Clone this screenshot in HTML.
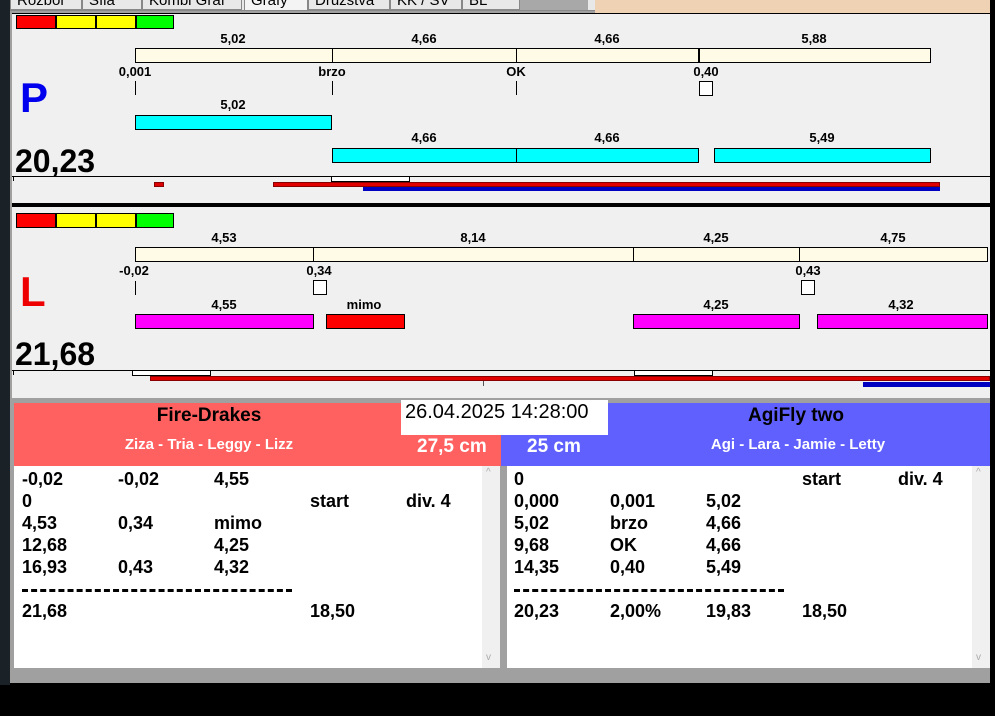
<!DOCTYPE html>
<html><head><meta charset="utf-8"><style>
*{margin:0;padding:0;box-sizing:border-box}
body{width:995px;height:716px;background:#000;position:relative;overflow:hidden;font-family:"Liberation Sans",Arial,sans-serif;font-weight:bold;color:#000}
div{position:absolute}
.t{font-size:13px;white-space:nowrap;transform:translateX(-50%)}
.c{border:1px solid #000}
.cr{background:#fffbe6}
.cy{background:#00ffff}
.mg{background:#ff00ff}
.r{font-size:18px;white-space:nowrap}
.sq{width:14px;height:15px;background:#fff;border:1px solid #000}
.tk{width:1px;height:14px;background:#000}
.tab{top:-9px;height:19px;background:#e8e8e8;border:1px solid #888;font-size:15px;font-weight:normal;padding:0 6px;white-space:nowrap;overflow:hidden}
</style></head><body>
<div style="left:0;top:0;width:10px;height:685px;background:#1a2228"></div>
<div style="left:10px;top:0;width:980px;height:685px;background:#a0a0a0"></div>
<!-- tabs -->
<div style="left:10px;top:0;width:585px;height:11px;background:#e8e8e8;border-bottom:1px solid #888"></div>
<div class="tab" style="left:10px;width:72px">Rozbor</div>
<div class="tab" style="left:82px;width:60px">Síla</div>
<div class="tab" style="left:142px;width:100px">Kombi Graf</div>
<div class="tab" style="left:244px;width:64px;background:#f4f4f4;border-bottom:none">Grafy</div>
<div class="tab" style="left:308px;width:82px">Družstva</div>
<div class="tab" style="left:390px;width:72px">KK / SV</div>
<div class="tab" style="left:462px;width:58px">BL</div>
<div style="left:520px;top:0;width:68px;height:10px;background:#a8a8a8"></div>
<div style="left:595px;top:0;width:395px;height:13px;background:#efd2b4"></div>
<!-- panel P -->
<div style="left:12px;top:13px;width:978px;height:190px;background:#f0f0f0;border-top:1px solid #000"></div>
<div style="left:16px;top:15px;width:40px;height:14px;background:#f00;border:1px solid #000"></div>
<div style="left:56px;top:15px;width:40px;height:14px;background:#ff0;border:1px solid #000"></div>
<div style="left:96px;top:15px;width:40px;height:14px;background:#ff0;border:1px solid #000"></div>
<div style="left:136px;top:15px;width:38px;height:14px;background:#0f0;border:1px solid #000"></div>
<div class="t" style="left:233px;top:31px">5,02</div>
<div class="t" style="left:424px;top:31px">4,66</div>
<div class="t" style="left:607px;top:31px">4,66</div>
<div class="t" style="left:814px;top:31px">5,88</div>
<div class="c cr" style="left:135px;top:48px;width:796px;height:15px"></div>
<div style="left:332px;top:48px;width:1px;height:15px;background:#000"></div>
<div style="left:516px;top:48px;width:1px;height:15px;background:#000"></div>
<div style="left:698px;top:48px;width:2px;height:15px;background:#000"></div>
<div class="t" style="left:135px;top:64px">0,001</div>
<div class="t" style="left:332px;top:64px">brzo</div>
<div class="t" style="left:516px;top:64px">OK</div>
<div class="t" style="left:706px;top:64px">0,40</div>
<div class="tk" style="left:135px;top:81px"></div>
<div class="tk" style="left:332px;top:81px"></div>
<div class="tk" style="left:516px;top:81px"></div>
<div class="sq" style="left:699px;top:81px"></div>
<div style="left:20px;top:74px;font-size:42px;color:#0000ee">P</div>
<div class="t" style="left:233px;top:97px">5,02</div>
<div class="c cy" style="left:135px;top:115px;width:197px;height:15px"></div>
<div class="t" style="left:424px;top:130px">4,66</div>
<div class="t" style="left:607px;top:130px">4,66</div>
<div class="t" style="left:822px;top:130px">5,49</div>
<div class="c cy" style="left:332px;top:148px;width:367px;height:15px"></div>
<div style="left:516px;top:148px;width:1px;height:15px;background:#000"></div>
<div class="c cy" style="left:714px;top:148px;width:217px;height:15px"></div>
<div style="left:15px;top:143px;font-size:32px">20,23</div>
<div style="left:12px;top:176px;width:978px;height:1px;background:#000"></div>
<div style="left:13px;top:176px;width:1px;height:5px;background:#000"></div>
<div style="left:331px;top:176px;width:79px;height:6px;background:#fff;border:1px solid #000"></div>
<div style="left:154px;top:182px;width:10px;height:5px;background:#d00;border:1px solid #800"></div>
<div style="left:273px;top:182px;width:667px;height:5px;background:#e00000;border:1px solid #800"></div>
<div style="left:363px;top:187px;width:577px;height:4px;background:#0000c0"></div>
<div style="left:12px;top:203px;width:978px;height:4px;background:#000"></div>
<!-- panel L -->
<div style="left:12px;top:207px;width:978px;height:191px;background:#f0f0f0"></div>
<div style="left:16px;top:213px;width:40px;height:15px;background:#f00;border:1px solid #000"></div>
<div style="left:56px;top:213px;width:40px;height:15px;background:#ff0;border:1px solid #000"></div>
<div style="left:96px;top:213px;width:40px;height:15px;background:#ff0;border:1px solid #000"></div>
<div style="left:136px;top:213px;width:38px;height:15px;background:#0f0;border:1px solid #000"></div>
<div class="t" style="left:224px;top:230px">4,53</div>
<div class="t" style="left:473px;top:230px">8,14</div>
<div class="t" style="left:716px;top:230px">4,25</div>
<div class="t" style="left:893px;top:230px">4,75</div>
<div class="c cr" style="left:135px;top:247px;width:853px;height:15px"></div>
<div style="left:313px;top:247px;width:1px;height:15px;background:#000"></div>
<div style="left:633px;top:247px;width:1px;height:15px;background:#000"></div>
<div style="left:799px;top:247px;width:1px;height:15px;background:#000"></div>
<div class="t" style="left:134px;top:263px">-0,02</div>
<div class="t" style="left:319px;top:263px">0,34</div>
<div class="t" style="left:808px;top:263px">0,43</div>
<div class="tk" style="left:135px;top:281px"></div>
<div class="sq" style="left:313px;top:280px"></div>
<div class="sq" style="left:801px;top:280px"></div>
<div style="left:20px;top:268px;font-size:42px;color:#ee0000">L</div>
<div class="t" style="left:224px;top:297px">4,55</div>
<div class="t" style="left:364px;top:297px">mimo</div>
<div class="t" style="left:716px;top:297px">4,25</div>
<div class="t" style="left:901px;top:297px">4,32</div>
<div class="c mg" style="left:135px;top:314px;width:179px;height:15px"></div>
<div class="c" style="left:326px;top:314px;width:79px;height:15px;background:#f00"></div>
<div class="c mg" style="left:633px;top:314px;width:167px;height:15px"></div>
<div class="c mg" style="left:817px;top:314px;width:171px;height:15px"></div>
<div style="left:15px;top:336px;font-size:32px">21,68</div>
<div style="left:12px;top:370px;width:978px;height:1px;background:#000"></div>
<div style="left:13px;top:370px;width:1px;height:5px;background:#000"></div>
<div style="left:132px;top:370px;width:79px;height:6px;background:#fff;border:1px solid #000"></div>
<div style="left:634px;top:370px;width:79px;height:6px;background:#fff;border:1px solid #000"></div>
<div style="left:150px;top:376px;width:840px;height:5px;background:#e00000;border:1px solid #800"></div>
<div style="left:483px;top:381px;width:1px;height:5px;background:#555"></div>
<div style="left:863px;top:382px;width:127px;height:5px;background:#0000c0"></div>
<!-- headers -->
<div style="left:14px;top:403px;width:487px;height:63px;background:#ff6060"></div>
<div style="left:501px;top:403px;width:489px;height:63px;background:#6060ff"></div>
<div style="left:401px;top:400px;width:207px;height:35px;background:#fff"></div>
<div style="left:405px;top:401px;font-size:20px;font-weight:normal">26.04.2025 14:28:00</div>
<div class="t" style="left:209px;top:405px;font-size:19px">Fire-Drakes</div>
<div class="t" style="left:209px;top:436px;font-size:15px;color:#fff">Ziza - Tria - Leggy - Lizz</div>
<div style="left:417px;top:436px;font-size:19px;color:#fff;font-weight:bold">27,5 cm</div>
<div style="left:527px;top:436px;font-size:19px;color:#fff">25 cm</div>
<div class="t" style="left:796px;top:405px;font-size:19px">AgiFly two</div>
<div class="t" style="left:798px;top:436px;font-size:15px;color:#fff">Agi - Lara - Jamie - Letty</div>
<!-- lists -->
<div style="left:14px;top:466px;width:486px;height:202px;background:#fff"></div>
<div style="left:482px;top:466px;width:18px;height:202px;background:#f0f0f0"></div>
<div style="left:507px;top:466px;width:483px;height:202px;background:#fff"></div>
<div style="left:972px;top:466px;width:18px;height:202px;background:#f0f0f0"></div>
<div style="left:486px;top:467px;font-size:10px;color:#aaa;font-weight:normal">^</div>
<div style="left:486px;top:652px;font-size:10px;color:#aaa;font-weight:normal">v</div>
<div style="left:976px;top:467px;font-size:10px;color:#aaa;font-weight:normal">^</div>
<div style="left:976px;top:652px;font-size:10px;color:#aaa;font-weight:normal">v</div>
<div style="left:10px;top:683px;width:985px;height:33px;background:#000"></div>
<div style="left:990px;top:0;width:5px;height:716px;background:#000"></div>

<div class="r" style="left:22px;top:469px">-0,02</div><div class="r" style="left:118px;top:469px">-0,02</div><div class="r" style="left:214px;top:469px">4,55</div>
<div class="r" style="left:22px;top:491px">0</div><div class="r" style="left:310px;top:491px">start</div><div class="r" style="left:406px;top:491px">div. 4</div>
<div class="r" style="left:22px;top:513px">4,53</div><div class="r" style="left:118px;top:513px">0,34</div><div class="r" style="left:214px;top:513px">mimo</div>
<div class="r" style="left:22px;top:535px">12,68</div><div class="r" style="left:214px;top:535px">4,25</div>
<div class="r" style="left:22px;top:557px">16,93</div><div class="r" style="left:118px;top:557px">0,43</div><div class="r" style="left:214px;top:557px">4,32</div>
<div style="left:22px;top:589px;width:270px;height:3px;border-top:3px dashed #000"></div>
<div class="r" style="left:22px;top:601px">21,68</div><div class="r" style="left:310px;top:601px">18,50</div>

<div class="r" style="left:514px;top:469px">0</div><div class="r" style="left:802px;top:469px">start</div><div class="r" style="left:898px;top:469px">div. 4</div>
<div class="r" style="left:514px;top:491px">0,000</div><div class="r" style="left:610px;top:491px">0,001</div><div class="r" style="left:706px;top:491px">5,02</div>
<div class="r" style="left:514px;top:513px">5,02</div><div class="r" style="left:610px;top:513px">brzo</div><div class="r" style="left:706px;top:513px">4,66</div>
<div class="r" style="left:514px;top:535px">9,68</div><div class="r" style="left:610px;top:535px">OK</div><div class="r" style="left:706px;top:535px">4,66</div>
<div class="r" style="left:514px;top:557px">14,35</div><div class="r" style="left:610px;top:557px">0,40</div><div class="r" style="left:706px;top:557px">5,49</div>
<div style="left:514px;top:589px;width:270px;height:3px;border-top:3px dashed #000"></div>
<div class="r" style="left:514px;top:601px">20,23</div><div class="r" style="left:610px;top:601px">2,00%</div><div class="r" style="left:706px;top:601px">19,83</div><div class="r" style="left:802px;top:601px">18,50</div>
</body></html>
